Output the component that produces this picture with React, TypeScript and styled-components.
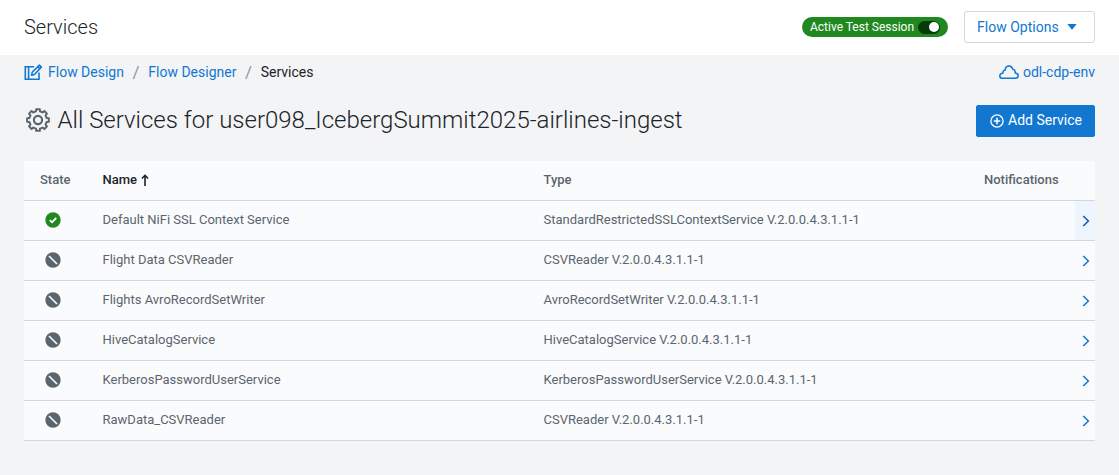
import React from 'react';
import styled, { createGlobalStyle } from 'styled-components';

const blue = '#1177d1';
const ink = '#1b2329';
const slate = '#5a656d';
const line = '#d3d7da';

const GlobalStyle = createGlobalStyle`
  * { box-sizing: border-box; }
  body {
    margin: 0;
    background: #f3f4f6;
    font-family: Roboto, sans-serif;
    font-size: 13px;
    color: ${slate};
  }
  svg { display: block; flex: none; }
`;

const Page = styled.div`
  min-height: 475px;
`;

const TopBar = styled.header`
  display: flex;
  align-items: center;
  height: 55px;
  padding: 0 24px 1px;
  background: #fff;
`;

const PageTitle = styled.h1`
  flex: 1;
  margin: 0;
  font-size: 20px;
  font-weight: 300;
  line-height: 28px;
  color: ${ink};
`;

const SessionPill = styled.div`
  display: flex;
  align-items: center;
  gap: 4px;
  height: 20px;
  margin-right: 16px;
  padding: 0 8px;
  border-radius: 10px;
  background: #1f8920;
  color: #fff;
  font-size: 12px;
  white-space: nowrap;
`;

const Toggle = styled.span`
  display: flex;
  align-items: center;
  justify-content: flex-end;
  width: 22px;
  height: 13px;
  padding-right: 1px;
  border-radius: 7px;
  background: #073a0b;
`;

const Knob = styled.span`
  width: 10px;
  height: 10px;
  border-radius: 50%;
  background: #fff;
`;

const Button = styled.button<{ $primary?: boolean }>`
  display: flex;
  align-items: center;
  height: 32px;
  padding: ${p => (p.$primary ? '0 12px 2px 13px' : '0 17px 1px 12px')};
  gap: ${p => (p.$primary ? '4px' : '8.4px')};
  border: 1px solid ${p => (p.$primary ? blue : line)};
  border-radius: ${p => (p.$primary ? '2px' : '3px')};
  background: ${p => (p.$primary ? blue : '#fff')};
  color: ${p => (p.$primary ? '#fff' : blue)};
  font: 400 14px/20px Roboto, sans-serif;
  white-space: nowrap;
`;

const Content = styled.main`
  padding: 7px 24px 0;
`;

const Crumbs = styled.nav`
  display: flex;
  align-items: center;
  height: 20px;
  font-size: 14px;
  line-height: 20px;
  color: ${ink};
`;

const Link = styled.a`
  display: flex;
  align-items: center;
  gap: 4px;
  color: ${blue};
`;

const EnvLink = styled(Link)`
  margin-left: auto;
`;

const Slash = styled.span`
  width: 24.3px;
  text-align: center;
  font-size: 17px;
  color: #8f979d;
`;

const Heading = styled.div`
  display: flex;
  align-items: center;
  justify-content: space-between;
  height: 32px;
  margin: 23px 0 24px;
`;

const HeadingText = styled.h2`
  display: flex;
  align-items: center;
  gap: 7.5px;
  margin: 0;
  padding: 0 0 2px 2px;
  font-size: 24px;
  font-weight: 300;
  line-height: 32px;
  color: ${ink};
`;

const Table = styled.div`
  background: #fafbfd;
`;

const Row = styled.div`
  display: grid;
  grid-template-columns: 78.5px 441px 440.5px 91px 20px;
  align-items: center;
  height: 40px;
  padding-bottom: 2px;
  border-bottom: 1px solid ${line};
`;

const HeaderRow = styled(Row)`
  font-weight: 500;
`;

const StateHead = styled.span`
  padding-left: 16px;
`;

const NameHead = styled.span`
  display: flex;
  align-items: center;
  gap: 4px;
  color: ${ink};
`;

const StateCell = styled.span`
  padding-left: 21px;
`;

const ExpandCell = styled.span<{ $active: boolean }>`
  grid-column: 5;
  display: flex;
  align-items: center;
  justify-content: center;
  height: 39px;
  margin-bottom: -2px;
  padding: 1px 0 0 1px;
  background: ${p => (p.$active ? '#edf6ff' : 'transparent')};
  color: ${p => (p.$active ? '#0b5ca8' : blue)};
`;

const gearPath = (() => {
  const teeth = 8;
  const outer = 11;
  const inner = 8.9;
  const points: string[] = [];
  for (let i = 0; i < teeth; i++) {
    const mid = (i * 360) / teeth - 90;
    [[-13, inner], [-9.5, outer], [9.5, outer], [13, inner]].forEach(([offset, r]) => {
      const a = ((mid + offset) * Math.PI) / 180;
      points.push(`${(12 + r * Math.cos(a)).toFixed(2)} ${(12 + r * Math.sin(a)).toFixed(2)}`);
    });
  }
  return `M${points.join('L')}Z`;
})();

const GearIcon = () => (
  <svg width="24" height="24" viewBox="0 0 24 24" fill="none" stroke={slate} strokeWidth="2" strokeLinejoin="round">
    <path d={gearPath} />
    <circle cx="12" cy="12" r="4.1" strokeWidth="2.1" />
  </svg>
);

const DesignIcon = () => (
  <svg width="20" height="18" viewBox="0 0 20 18" fill="none" stroke={blue} strokeWidth="1.6">
    <path d="M10 3.7H1.3V16.2H15V9.5" />
    <path d="M4.6 3.7V16.2" />
    <path d="M7.6 12.3L8.2 9.3L15.4 2.1L17.4 4.1L10.4 11.5Z" strokeLinejoin="round" />
    <path d="M13.8 3.7L16 5.9" />
  </svg>
);

const CloudIcon = () => (
  <svg width="20" height="16" viewBox="0 0 20 16" fill="none" stroke={blue} strokeWidth="1.5" strokeLinejoin="round">
    <path d="M3.4 14.3H16.6C18.2 14.3 19.2 13.2 19.2 11.8C19.2 10.1 17.8 9.1 16.2 8.9C16.5 6.8 15.3 5.5 13.8 5.3C13.2 3.2 12 1.9 10.2 1.9C7.8 1.9 6.2 3.7 6.2 6C4.6 6.2 3.8 7.4 4 8.9C2 9.1 0.8 10.3 0.8 11.9C0.8 13.3 1.8 14.3 3.4 14.3Z" />
  </svg>
);

const PlusCircleIcon = () => (
  <svg width="14" height="16" viewBox="0 -2 14 16" fill="none" stroke="#fff" strokeWidth="1.3">
    <circle cx="7" cy="7" r="6.1" />
    <path d="M7 3.8V10.2M3.8 7H10.2" strokeWidth="1.6" />
  </svg>
);

const CaretIcon = () => (
  <svg width="10" height="6" viewBox="0 0 10 6" fill={blue}>
    <path d="M0.3 0H9.7L5 5.8Z" />
  </svg>
);

const SortIcon = () => (
  <svg width="8" height="12" viewBox="0 0 8 12" fill="none" stroke={ink} strokeWidth="1.6">
    <path d="M4 12V1.3M0.9 4.5L4 1.3L7.1 4.5" />
  </svg>
);

const EnabledIcon = () => (
  <svg width="16" height="16" viewBox="0 0 16 16">
    <circle cx="8" cy="8" r="7.7" fill="#1f8920" />
    <path d="M4.8 8.2L7 10.3L11.2 6" fill="none" stroke="#fff" strokeWidth="1.8" />
  </svg>
);

const DisabledIcon = () => (
  <svg width="16" height="16" viewBox="0 0 16 16">
    <circle cx="8" cy="8" r="7.7" fill={slate} />
    <path d="M4 4L12 12" stroke="#fff" strokeWidth="1.6" />
  </svg>
);

const ChevronIcon = () => (
  <svg width="8" height="12" viewBox="0 0 8 12" fill="none" stroke="currentColor" strokeWidth="1.5">
    <path d="M1.2 1L6.4 6L1.2 11" />
  </svg>
);

const version = 'V.2.0.0.4.3.1.1-1';

const services = [
  { name: 'Default NiFi SSL Context Service', type: 'StandardRestrictedSSLContextService', enabled: true },
  { name: 'Flight Data CSVReader', type: 'CSVReader', enabled: false },
  { name: 'Flights AvroRecordSetWriter', type: 'AvroRecordSetWriter', enabled: false },
  { name: 'HiveCatalogService', type: 'HiveCatalogService', enabled: false },
  { name: 'KerberosPasswordUserService', type: 'KerberosPasswordUserService', enabled: false },
  { name: 'RawData_CSVReader', type: 'CSVReader', enabled: false },
];

export default function App() {
  return (
    <Page>
      <GlobalStyle />
      <TopBar>
        <PageTitle>Services</PageTitle>
        <SessionPill>
          <span>Active Test Session</span>
          <Toggle><Knob /></Toggle>
        </SessionPill>
        <Button>
          <span>Flow Options</span>
          <CaretIcon />
        </Button>
      </TopBar>
      <Content>
        <Crumbs>
          <Link><DesignIcon /><span>Flow Design</span></Link>
          <Slash>/</Slash>
          <Link>Flow Designer</Link>
          <Slash>/</Slash>
          <span>Services</span>
          <EnvLink><CloudIcon /><span>odl-cdp-env</span></EnvLink>
        </Crumbs>
        <Heading>
          <HeadingText>
            <GearIcon />
            <span>All Services for user098_IcebergSummit2025-airlines-ingest</span>
          </HeadingText>
          <Button $primary>
            <PlusCircleIcon />
            <span>Add Service</span>
          </Button>
        </Heading>
        <Table>
          <HeaderRow>
            <StateHead>State</StateHead>
            <NameHead><span>Name</span><SortIcon /></NameHead>
            <span>Type</span>
            <span>Notifications</span>
          </HeaderRow>
          {services.map((service, i) => (
            <Row key={service.name}>
              <StateCell>{service.enabled ? <EnabledIcon /> : <DisabledIcon />}</StateCell>
              <span>{service.name}</span>
              <span>{service.type} {version}</span>
              <ExpandCell $active={i === 0}><ChevronIcon /></ExpandCell>
            </Row>
          ))}
        </Table>
      </Content>
    </Page>
  );
}
